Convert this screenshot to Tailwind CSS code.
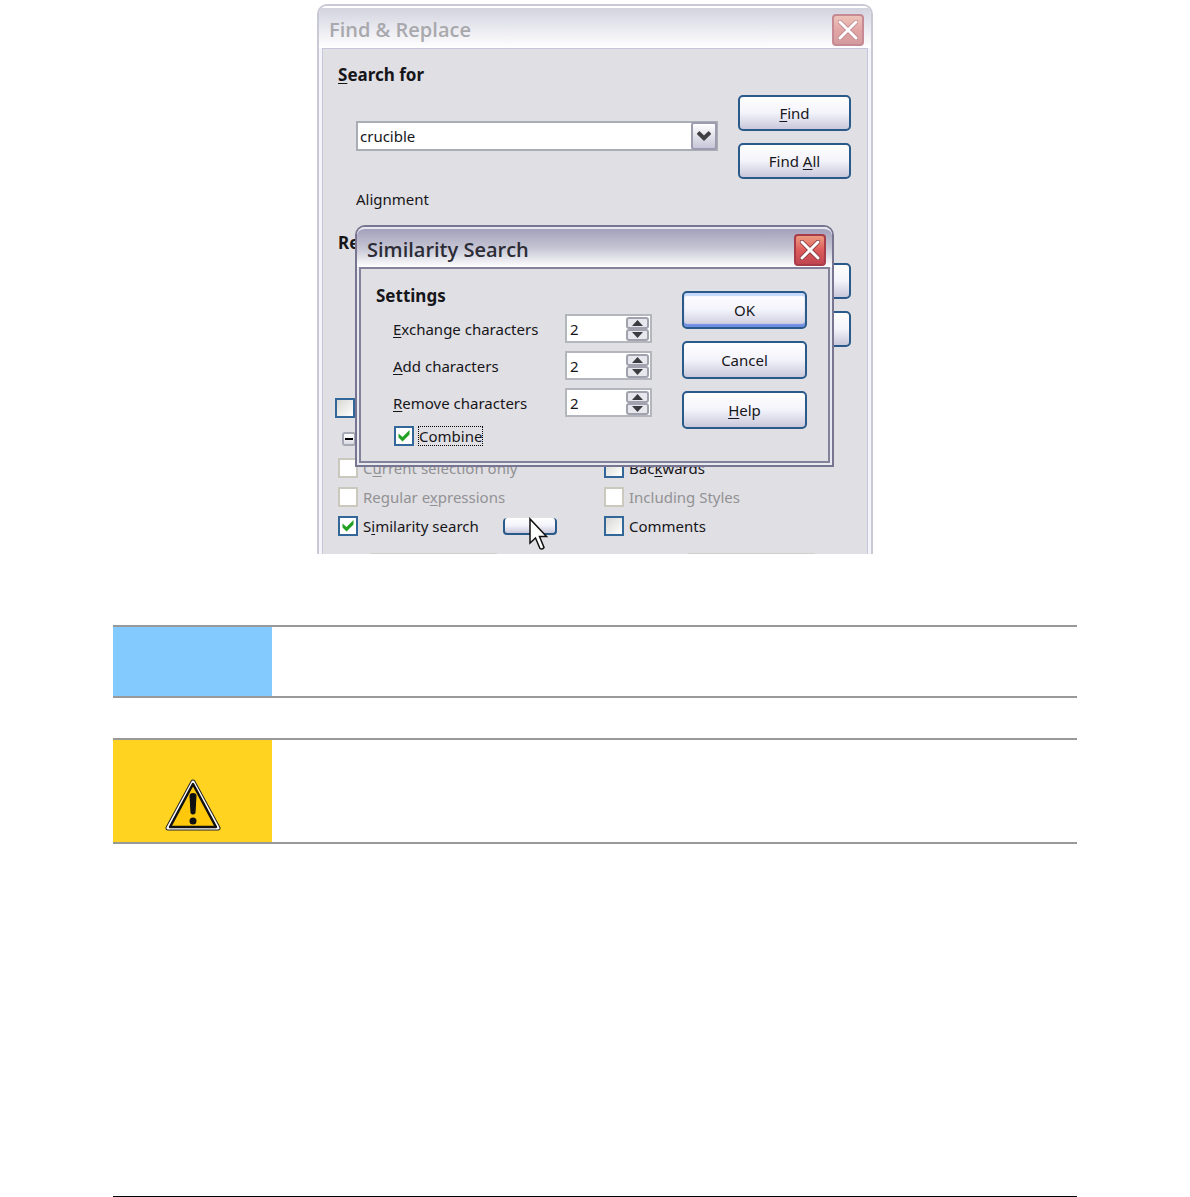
<!DOCTYPE html>
<html lang="en">
<head>
    <meta charset="UTF-8">
    <meta name="viewport" content="width=device-width, initial-scale=1.0">
    <title>Similarity Search</title>
    <script src="https://cdn.jsdelivr.net/npm/@tailwindcss/browser@4"></script>
</head>
<body class="bg-white text-[#16161a] font-['Noto_Sans',sans-serif] text-[15px] leading-6">
<main class="flex min-h-screen flex-col px-[113px] pt-1">

    <!-- Find & Replace window -->
    <section class="relative mx-auto w-[556px]">
        <div class="overflow-hidden rounded-t-[10px] border-2 border-b-0 border-[#c9c9d6] bg-[#f4f4fa] px-[3px]">
            <header class="-mx-[3px] flex h-[42px] items-center justify-between border-t-2 border-white bg-linear-to-b from-[#d3d3df] via-[#e9e9f0] to-white pr-[7px] pl-[10px] pt-1">
                <h1 class="font-['Open_Sans',sans-serif] text-[20px] font-semibold text-[#a9a9ad]">Find &amp; Replace</h1>
                <button aria-label="Close" class="grid size-8 place-items-center rounded-[4px] border-2 border-[#c58a94] bg-linear-to-b from-[#ecc4b8] via-[#e2a5a5] to-[#d39a9e]">
                    <svg class="size-5" viewBox="0 0 20 20" fill="none" stroke-linecap="round"><path d="M2 2l16 16M18 2L2 18" stroke="#b98088" stroke-width="4.500"/><path d="M2 2l16 16M18 2L2 18" stroke="#fff" stroke-width="3"/></svg>
                </button>
            </header>

            <div class="h-[506px] overflow-hidden border border-b-0 border-[#c6c6da] bg-[#e0dfe3] px-[15px] pt-[14px]">
                <div class="flex h-[168px] justify-between">
                    <div>
                        <h2 class="text-[17px] font-bold"><label for="search"><u class="underline-offset-2">S</u>earch for</label></h2>
                        <div class="mt-[34px] ml-[18px] grid w-[362px]">
                            <select id="search" class="col-start-1 row-start-1 h-[30px] appearance-none border-2 border-[#a9adb5] bg-white pl-[2px]">
                                <option>crucible</option>
                            </select>
                            <span class="pointer-events-none col-start-1 row-start-1 mr-px grid h-[28px] w-[26px] place-items-center self-center justify-self-end rounded-[3px] border-2 border-[#9c9cae] bg-linear-to-b from-white to-[#c6c6d8]">
                                <svg class="h-[10px] w-[14px]" viewBox="0 0 14 10" fill="none" stroke="#404044" stroke-width="4"><path d="M1 1.500L7 7.200L13 1.500"/></svg>
                            </span>
                        </div>
                        <p class="mt-9 ml-[18px]">Alignment</p>
                    </div>
                    <div class="mr-px flex w-[113px] flex-col gap-3 pt-8">
                        <button class="h-9 rounded-[5px] border-2 border-[#2a5a8a] bg-linear-to-b from-white via-[#f3f3fb] to-[#c9c8db]"><u class="underline-offset-2">F</u>ind</button>
                        <button class="h-9 rounded-[5px] border-2 border-[#2a5a8a] bg-linear-to-b from-white via-[#f3f3fb] to-[#c9c8db]">Find <u class="underline-offset-2">A</u>ll</button>
                    </div>
                </div>

                <div class="flex h-[165px] justify-between">
                    <h2 class="text-[17px] font-bold">Re</h2>
                    <div class="mr-px flex w-[113px] flex-col gap-3 pt-8">
                        <button aria-label="Replace" class="h-9 rounded-[5px] border-2 border-[#2a5a8a] bg-linear-to-b from-white via-[#f3f3fb] to-[#c9c8db]"></button>
                        <button aria-label="Replace All" class="h-9 rounded-[5px] border-2 border-[#2a5a8a] bg-linear-to-b from-white via-[#f3f3fb] to-[#c9c8db]"></button>
                    </div>
                </div>

                <input type="checkbox" aria-label="Match case" class="mt-[2px] -ml-[3px] block size-5 appearance-none border-2 border-[#33679a] bg-linear-to-br from-[#d8d8d4] to-white">
                <button aria-label="Options" class="mt-[14px] ml-1 grid size-[14px] place-items-center rounded-[3px] border-2 border-[#a6a9b3] bg-linear-to-b from-white to-[#dcdce6]"><span class="h-0.5 w-2 bg-black"></span></button>

                <div class="mt-[10px] grid grid-cols-[266px_1fr] gap-y-[5px]">
                    <label class="flex items-center gap-[5px] text-[#929295]">
                        <input type="checkbox" disabled class="size-5 appearance-none border-2 border-[#cbc9bd] bg-white">
                        <span>C<u class="underline-offset-2">u</u>rrent selection only</span>
                    </label>
                    <label class="flex items-center gap-[5px]">
                        <input type="checkbox" class="size-5 appearance-none border-2 border-[#33679a] bg-linear-to-br from-[#d8d8d4] to-white">
                        <span>Bac<u class="underline-offset-2">k</u>wards</span>
                    </label>
                    <label class="flex items-center gap-[5px] text-[#929295]">
                        <input type="checkbox" disabled class="size-5 appearance-none border-2 border-[#cbc9bd] bg-white">
                        <span>Regular e<u class="underline-offset-2">x</u>pressions</span>
                    </label>
                    <label class="flex items-center gap-[5px] text-[#929295]">
                        <input type="checkbox" disabled class="size-5 appearance-none border-2 border-[#cbc9bd] bg-white">
                        <span>Including Styles</span>
                    </label>
                    <div class="flex items-center justify-between pr-[47px]">
                        <label class="flex items-center gap-[5px]">
                            <span class="grid place-items-center">
                                <input type="checkbox" checked class="col-start-1 row-start-1 size-5 appearance-none border-2 border-[#33679a] bg-white">
                                <svg class="pointer-events-none col-start-1 row-start-1 size-3" viewBox="0 0 12 12" fill="#21a121"><path d="M0.500 3.500L4.500 7L11.500 0V4.500L4.500 11.500L0.500 7.500Z"/></svg>
                            </span>
                            <span>S<u class="underline-offset-2">i</u>milarity search</span>
                        </label>
                        <button aria-label="Similarity options" class="h-[17px] w-[54px] rounded-[4px] border-2 border-t-0 border-[#2a5a8a] bg-linear-to-b from-white via-[#f3f3fb] to-[#c9c8db]"></button>
                    </div>
                    <label class="flex items-center gap-[5px]">
                        <input type="checkbox" class="size-5 appearance-none border-2 border-[#33679a] bg-linear-to-br from-[#d8d8d4] to-white">
                        <span>Comments</span>
                    </label>
                </div>

                <!-- top edges of the next row of controls -->
                <div class="mt-[15px] flex justify-between pr-[37px] pl-8">
                    <span class="h-1 w-[127px] bg-[#d2cfce]"></span>
                    <span class="h-1 w-[127px] bg-[#d2cfce]"></span>
                </div>
            </div>
        </div>

        <!-- Similarity Search window -->
        <div class="absolute top-[221px] left-[38px] w-[479px] rounded-t-[10px] border-2 border-[#77758f] bg-[#e9e9f2] px-[2px] pb-[2px]">
            <header class="-mx-[2px] flex h-[40px] items-center justify-between rounded-t-[8px] border-t-2 border-[#e6e6f0] bg-linear-to-b from-[#a3a1bb] via-[#c5c5d4] to-white pr-[6px] pl-[10px] pt-1">
                <h2 class="font-['Open_Sans',sans-serif] text-[20px] font-semibold text-[#2c2c36]">Similarity Search</h2>
                <button aria-label="Close" class="grid size-8 place-items-center rounded-[4px] border-2 border-[#a83c48] bg-linear-to-b from-[#eb9a80] via-[#dd5c5c] to-[#bf4550]">
                    <svg class="size-5" viewBox="0 0 20 20" fill="none" stroke-linecap="round"><path d="M2 2l16 16M18 2L2 18" stroke="#7d3038" stroke-width="4.500"/><path d="M2 2l16 16M18 2L2 18" stroke="#fff" stroke-width="3"/></svg>
                </button>
            </header>

            <div class="flex h-[196px] justify-between border-2 border-[#84829b] bg-[#e0dfe3] pt-[15px] pr-[21px] pl-[15px]">
                <div>
                    <h3 class="text-[17px] font-bold">Settings</h3>
                    <div class="mt-[6px] ml-[17px] grid grid-cols-[172px_87px] items-center gap-y-2">
                        <label for="exchange"><u class="underline-offset-2">E</u>xchange characters</label>
                        <div class="flex h-[29px] items-center border-2 border-[#b3b6bd] bg-white">
                            <input id="exchange" type="text" value="2" class="w-full min-w-0 pl-[3px]">
                            <span class="flex shrink-0 flex-col pr-px">
                                <button aria-label="More" class="grid h-3 w-[23px] place-items-center rounded-[3px] border-2 border-[#a2a2ae] bg-[#e7e7ee]"><svg class="h-[6px] w-[11px]" viewBox="0 0 11 6" fill="#3c3c40"><path d="M0 6L5.500 0L11 6Z"/></svg></button>
                                <button aria-label="Less" class="grid h-3 w-[23px] place-items-center rounded-[3px] border-2 border-[#a2a2ae] bg-[#e7e7ee]"><svg class="h-[6px] w-[11px]" viewBox="0 0 11 6" fill="#3c3c40"><path d="M0 0L5.500 6L11 0Z"/></svg></button>
                            </span>
                        </div>
                        <label for="add"><u class="underline-offset-2">A</u>dd characters</label>
                        <div class="flex h-[29px] items-center border-2 border-[#b3b6bd] bg-white">
                            <input id="add" type="text" value="2" class="w-full min-w-0 pl-[3px]">
                            <span class="flex shrink-0 flex-col pr-px">
                                <button aria-label="More" class="grid h-3 w-[23px] place-items-center rounded-[3px] border-2 border-[#a2a2ae] bg-[#e7e7ee]"><svg class="h-[6px] w-[11px]" viewBox="0 0 11 6" fill="#3c3c40"><path d="M0 6L5.500 0L11 6Z"/></svg></button>
                                <button aria-label="Less" class="grid h-3 w-[23px] place-items-center rounded-[3px] border-2 border-[#a2a2ae] bg-[#e7e7ee]"><svg class="h-[6px] w-[11px]" viewBox="0 0 11 6" fill="#3c3c40"><path d="M0 0L5.500 6L11 0Z"/></svg></button>
                            </span>
                        </div>
                        <label for="remove"><u class="underline-offset-2">R</u>emove characters</label>
                        <div class="flex h-[29px] items-center border-2 border-[#b3b6bd] bg-white">
                            <input id="remove" type="text" value="2" class="w-full min-w-0 pl-[3px]">
                            <span class="flex shrink-0 flex-col pr-px">
                                <button aria-label="More" class="grid h-3 w-[23px] place-items-center rounded-[3px] border-2 border-[#a2a2ae] bg-[#e7e7ee]"><svg class="h-[6px] w-[11px]" viewBox="0 0 11 6" fill="#3c3c40"><path d="M0 6L5.500 0L11 6Z"/></svg></button>
                                <button aria-label="Less" class="grid h-3 w-[23px] place-items-center rounded-[3px] border-2 border-[#a2a2ae] bg-[#e7e7ee]"><svg class="h-[6px] w-[11px]" viewBox="0 0 11 6" fill="#3c3c40"><path d="M0 0L5.500 6L11 0Z"/></svg></button>
                            </span>
                        </div>
                    </div>
                    <label class="mt-[9px] ml-[18px] flex w-max items-center gap-1">
                        <span class="grid place-items-center">
                            <input type="checkbox" checked class="col-start-1 row-start-1 size-5 appearance-none border-2 border-[#33679a] bg-white">
                            <svg class="pointer-events-none col-start-1 row-start-1 size-3" viewBox="0 0 12 12" fill="#21a121"><path d="M0.500 3.500L4.500 7L11.500 0V4.500L4.500 11.500L0.500 7.500Z"/></svg>
                        </span>
                        <span class="h-5 border border-dotted border-black leading-[18px]">Combine</span>
                    </label>
                </div>
                <div class="flex w-[125px] flex-col gap-3 pt-[7px]">
                    <button class="h-[38px] rounded-[5px] border-2 border-[#2a5a8a] bg-linear-to-b from-white via-[#f3f3fb] to-[#c9c8db] shadow-[inset_0_3px_1px_#c3d8fb,inset_0_-3px_1px_#6f8ee4]">OK</button>
                    <button class="h-[38px] rounded-[5px] border-2 border-[#2a5a8a] bg-linear-to-b from-white via-[#f3f3fb] to-[#c9c8db]">Cancel</button>
                    <button class="h-[38px] rounded-[5px] border-2 border-[#2a5a8a] bg-linear-to-b from-white via-[#f3f3fb] to-[#c9c8db]"><u class="underline-offset-2">H</u>elp</button>
                </div>
            </div>
        </div>

        <!-- mouse pointer -->
        <svg class="absolute top-[513px] left-[212px] h-[34px] w-[20px]" viewBox="0 0 20 34" fill="#fff" stroke="#111" stroke-width="1.500"><path d="M1 2V26L6.500 21L11 31.500Q13 33 15 30.500L10.500 19.500H17.500Z"/></svg>
    </section>

    <!-- note -->
    <section class="mt-[71px] h-[73px] border-y-2 border-[#999]">
        <div class="h-full w-[159px] bg-[#83caff]"></div>
    </section>

    <!-- caution -->
    <section class="mt-10 h-[106px] border-y-2 border-[#999]">
        <div class="flex h-full w-[159px] items-end justify-center bg-[#ffd320] pb-[11px]">
            <svg class="h-[52px] w-[56px]" viewBox="0 0 56 52" stroke-linejoin="round"><path d="M28 3L53 49H3Z" fill="none" stroke="#222" stroke-width="5"/><path d="M28 3L53 49H3Z" fill="none" stroke="#fff" stroke-width="3"/><path d="M28 5L51 48H5Z" fill="#ffc80a" stroke="#111" stroke-width="2.500"/><path d="M24.500 17Q24.500 14 28 14Q31.500 14 31.500 17L30.500 34Q28 37 25.500 34Z" fill="#111"/><circle cx="28" cy="42" r="3.500" fill="#111"/></svg>
        </div>
    </section>

    <hr class="mt-auto border-black">
</main>
</body>
</html>
